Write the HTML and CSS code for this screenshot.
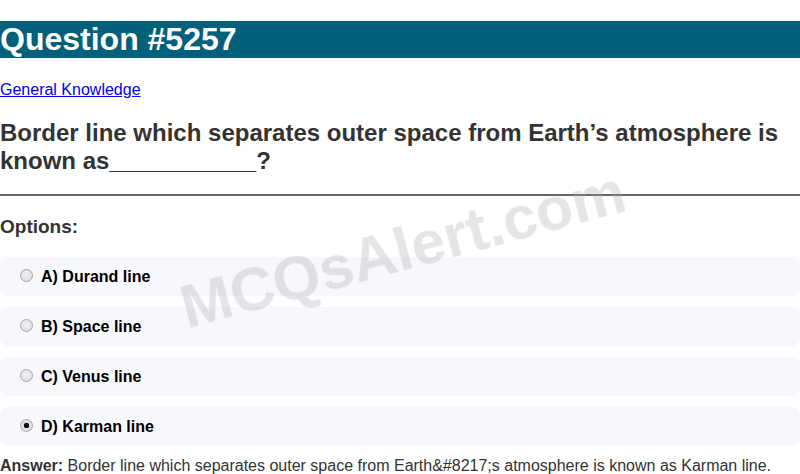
FILE: index.html
```html
<!DOCTYPE html>
<html>
<head>
<meta charset="utf-8">
<link rel="stylesheet" href="styles.css">
</head>
<body>
<h1 class="title">Question #5257</h1>
<a class="cat" href="#">General Knowledge</a>
<h2 class="question">Border line which separates outer space from Earth’s atmosphere is known as___________?</h2>
<hr class="rule">
<h3 class="opts-title">Options:</h3>
<div class="option"><label class="opt-label"><input class="radio" type="radio" name="q" disabled><span>A) Durand line</span></label></div>
<div class="option"><label class="opt-label"><input class="radio" type="radio" name="q" disabled><span>B) Space line</span></label></div>
<div class="option"><label class="opt-label"><input class="radio" type="radio" name="q" disabled><span>C) Venus line</span></label></div>
<div class="option"><label class="opt-label"><input class="radio" type="radio" name="q" disabled checked><span>D) Karman line</span></label></div>
<p class="answer"><b>Answer:</b> Border line which separates outer space from Earth&amp;#8217;s atmosphere is known as Karman line.</p>
<div class="watermark">MCQsAlert.com</div>
</body>
</html>
```
FILE: styles.css
```css
html, body {
  margin: 0;
  padding: 0;
  font-family: "Liberation Sans", Arial, sans-serif;
  background: #fff;
  overflow: hidden;
}
.title {
  margin: 21px 0 21px;
  font-size: 32px;
  font-weight: bold;
  line-height: 37px;
  color: #fff;
  background: #03607a;
}
.cat {
  display: block;
  padding-top: 2px;
  color: #0000ee;
  font-size: 16px;
  line-height: 18px;
}
.question {
  margin: 20px 0 19px;
  font-size: 24px;
  line-height: 28px;
  color: #333;
}
.rule {
  margin: 0;
  border: 0;
  border-top: 2px solid #666;
}
.opts-title {
  margin: 20px 0 19px;
  font-size: 19px;
  line-height: 22px;
  color: #333;
}
.option {
  background: #f7f8fc;
  border-radius: 8px;
  padding: 10px 15px;
  margin-bottom: 11px;
  font-size: 16px;
  font-weight: bold;
  color: #000;
}
.opt-label {
  display: flex;
  align-items: center;
  height: 19px;
}
.radio {
  appearance: none;
  -webkit-appearance: none;
  box-sizing: border-box;
  width: 13px;
  height: 13px;
  margin: 0 8px 0 5px;
  border: 1px solid #a8a8a8;
  border-radius: 50%;
  background: radial-gradient(circle at 50% 40%, #f0f0f0 0%, #dcdcdc 100%);
  position: relative;
  top: -1px;
}
.radio:checked {
  background: radial-gradient(circle, #111 0, #111 2.5px, #dcdcdc 3px, #e4e4e4 100%);
}
.answer {
  margin: 0;
  font-size: 16px;
  line-height: 18px;
  color: #333;
}
.answer b {
  color: #333;
}
.watermark {
  position: fixed;
  left: 174px;
  top: 214px;
  font-size: 61px;
  font-weight: bold;
  color: rgba(170, 170, 170, 0.3);
  transform: rotate(-15deg);
  transform-origin: center;
  pointer-events: none;
  white-space: nowrap;
}
```
